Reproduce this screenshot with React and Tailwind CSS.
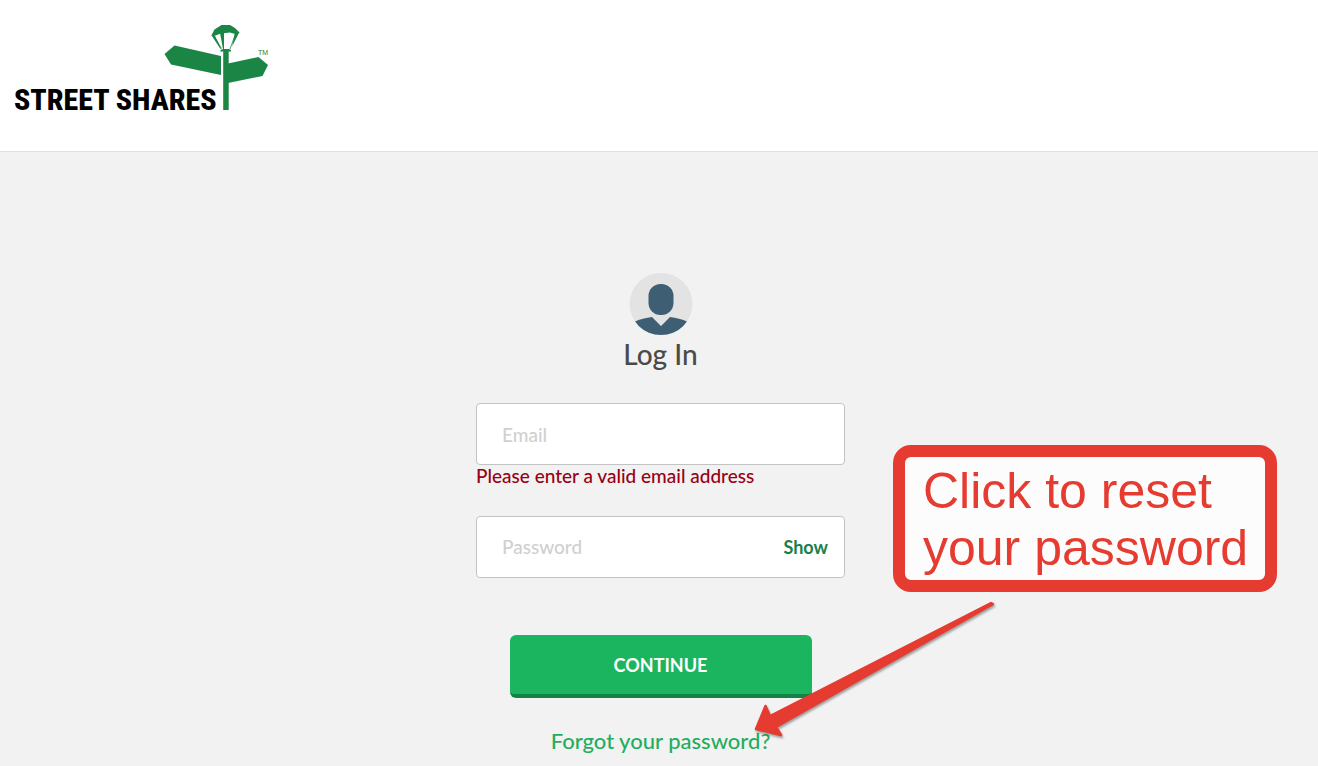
import React, { useState } from 'react'

function Logo() {
  return (
    <svg viewBox="14 24 256 96" className="h-24 w-64" role="img" aria-label="Street Shares">
      <text x="14" y="110" fontSize="30" fontWeight="800" fill="#000" fontFamily="'Noto Sans ExtraCondensed', 'Noto Sans Condensed', 'Roboto Condensed', Roboto, sans-serif">STREET SHARES</text>
      <g fill="#1b8546">
        <path d="M174.500 45.500L221 56V75L171 64.500L164.500 54Z" />
        <path d="M228 63.500L258.500 57L268 65L262.500 76L228 83Z" />
        <path d="M223.200 51H228.700V110H223.200Z" />
        <path d="M220.500 50L223 49H229L231 50V51.500H220.500Z" />
        <path d="M221.500 25H230L235 28L239.500 32.500L235 34L230 32.500L221 33.500L214 36L211.300 35.500L214.500 29.500Z" />
        <path d="M211.300 35L214.800 35.500L221.200 48.500L220.500 49Z" />
        <path d="M220 33H224V49H223Z" />
        <path d="M235 32.500L239.500 32L232 46.500Z" />
        <path d="M214 36L221.500 48.500M235.500 34L230 49" fill="none" stroke="#1b8546" strokeWidth="0.800" />
        <text x="258" y="55" fontSize="7" fontFamily="'Liberation Sans', sans-serif">TM</text>
      </g>
    </svg>
  )
}

function Avatar() {
  return (
    <svg viewBox="0 0 64 62" className="h-[62px] w-16" aria-hidden="true">
      <defs>
        <clipPath id="avatar-clip"><ellipse cx="32" cy="31" rx="31.500" ry="31" /></clipPath>
      </defs>
      <ellipse cx="32" cy="31" rx="31.500" ry="31" fill="#e3e3e3" />
      <g fill="#3e5f73" clipPath="url(#avatar-clip)">
        <rect x="19.500" y="11" width="25" height="31" rx="12" />
        <path d="M5 49C11 46 17 45 23 44L32 53L41 44C47 45 53 46 59 49V62H5Z" />
      </g>
    </svg>
  )
}

function Callout() {
  return (
    <div className="absolute left-[417px] top-[172px] w-96 rounded-[18px] border-12 border-[#e63b30] bg-[#fcfcfc] pt-1.5 pr-3 pb-[3px] pl-[18px] font-['Liberation_Sans',sans-serif] text-[50px] leading-[57px] text-[#e63b30]">
      Click to reset your password
    </div>
  )
}

function Arrow() {
  return (
    <svg viewBox="750 600 250 144" className="pointer-events-none absolute left-[274px] top-[327px] h-36 w-[250px] drop-shadow-[1px_2px_1px_rgba(0,0,0,0.35)]" aria-hidden="true">
      <path d="M756 729L765.500 706L770 716L991 603L993 604L776 727L781 735Z" fill="#e63b30" stroke="#e63b30" strokeWidth="2.500" strokeLinejoin="round" />
    </svg>
  )
}

export default function App() {
  const [email, setEmail] = useState('')
  const [password, setPassword] = useState('')
  const [show, setShow] = useState(false)

  return (
    <div className="min-h-screen bg-[#f2f2f2] font-['Lato',sans-serif] font-medium">
      <header className="border-b border-[#e1e1e1] bg-white px-3.5 pt-6 pb-[31px]">
        <a href="#" className="block w-64"><Logo /></a>
      </header>

      <main className="flex justify-center pt-[121px] pl-[3px]">
        <form className="relative flex w-[369px] flex-col" onSubmit={e => e.preventDefault()}>
          <div className="mb-[30px] flex flex-col items-center">
            <Avatar />
            <h1 className="text-[28px] leading-[38px] text-[#4a4a4a]">Log In</h1>
          </div>

          <input type="email" aria-label="Email" aria-describedby="email-error" placeholder="Email"
            value={email} onChange={e => setEmail(e.target.value)}
            className="h-[62px] w-full rounded border border-[#c3c3c3] bg-white px-[25px] text-[19px] text-[#4a4a4a] outline-none placeholder:text-[#d0d0d0]" />
          <p id="email-error" className="mb-[29px] text-[19px] leading-[22px] text-[#990012]">Please enter a valid email address</p>

          <div className="flex h-[62px] items-center rounded border border-[#c3c3c3] bg-white pr-4 pl-[25px]">
            <input type={show ? 'text' : 'password'} aria-label="Password" placeholder="Password"
              value={password} onChange={e => setPassword(e.target.value)}
              className="min-w-0 flex-1 bg-transparent text-[19px] text-[#4a4a4a] outline-none placeholder:text-[#d0d0d0]" />
            <button type="button" onClick={() => setShow(!show)} className="text-lg font-bold text-[#17804a]">
              {show ? 'Hide' : 'Show'}
            </button>
          </div>

          <button type="submit" className="mt-[57px] h-[63px] w-[302px] self-center rounded-md border-b-4 border-[#148244] bg-[#1bb55f] text-lg font-bold text-white">
            CONTINUE
          </button>
          <a href="#" className="mt-[29px] self-center text-[22px] leading-7 text-[#1fae5e]">Forgot your password?</a>

          <Callout />
          <Arrow />
        </form>
      </main>
    </div>
  )
}
